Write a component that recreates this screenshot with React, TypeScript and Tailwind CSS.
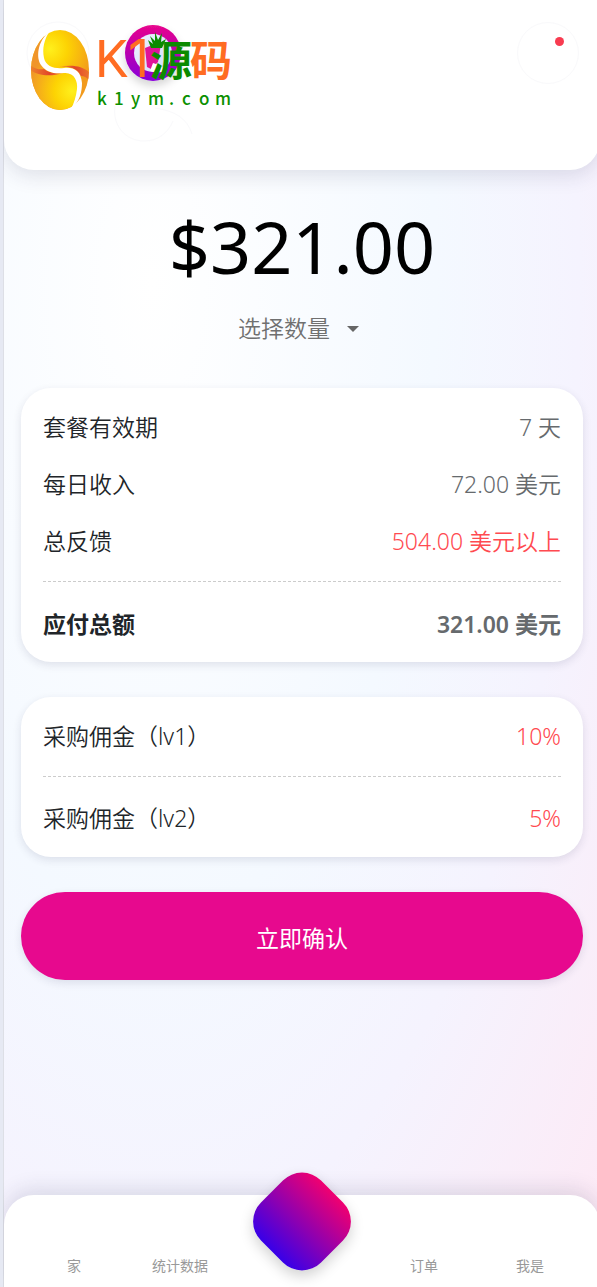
import { useState } from "react"

type Row = {
    label: string
    value: string
    accent?: boolean
}

const planRows: Row[] = [
    { label: "套餐有效期", value: "7 天" },
    { label: "每日收入", value: "72.00 美元" },
    { label: "总反馈", value: "504.00 美元以上", accent: true },
]

const commissionRows: Row[] = [
    { label: "采购佣金（lv1）", value: "10%" },
    { label: "采购佣金（lv2）", value: "5%" },
]

const Logo = () => (
    <svg
        width="240"
        height="135"
        viewBox="0 0 240 135"
        role="img"
        aria-label="K1源码 k1ym.com"
        className="block"
    >
        <defs>
            <radialGradient id="gold" gradientUnits="userSpaceOnUse" cx="29" cy="42" r="44">
                <stop offset="0" stopColor="#fff01c" />
                <stop offset="0.4" stopColor="#fdd303" />
                <stop offset="1" stopColor="#f29a1c" />
            </radialGradient>
            <radialGradient id="goldLow" gradientUnits="userSpaceOnUse" cx="51" cy="84" r="44">
                <stop offset="0" stopColor="#fff01c" />
                <stop offset="0.4" stopColor="#fdd303" />
                <stop offset="1" stopColor="#f0952a" />
            </radialGradient>
            <linearGradient id="flameLeft" x1="0" y1="0" x2="1" y2="0">
                <stop offset="0" stopColor="#ee8a2c" />
                <stop offset="0.6" stopColor="#e2452a" />
                <stop offset="1" stopColor="#f08a22" />
            </linearGradient>
            <linearGradient id="flameRight" x1="0" y1="0" x2="1" y2="0">
                <stop offset="0" stopColor="#f39a21" />
                <stop offset="0.5" stopColor="#e2452a" />
                <stop offset="1" stopColor="#ee7a2c" />
            </linearGradient>
            <linearGradient id="ring" x1="0" y1="0" x2="0" y2="1">
                <stop offset="0" stopColor="#e8078c" />
                <stop offset="0.5" stopColor="#b800b0" />
                <stop offset="1" stopColor="#8800dc" />
            </linearGradient>
            <linearGradient id="core" x1="0" y1="0" x2="1" y2="1">
                <stop offset="0" stopColor="#eef2ff" />
                <stop offset="1" stopColor="#cfdcfa" />
            </linearGradient>
            <clipPath id="coin">
                <ellipse cx="39" cy="63" rx="29" ry="40" />
            </clipPath>
            <filter id="ringShadow" x="-40%" y="-40%" width="180%" height="180%">
                <feDropShadow dx="0" dy="5" stdDeviation="4" floodColor="#000" floodOpacity="0.16" />
            </filter>
        </defs>

        {/* faint outlines behind the mark */}
        <g fill="none" stroke="#f9f9fb">
            <circle cx="37" cy="46" r="31" />
            <path d="M94 99c-3 20 11 35 29 35 14 0 24-8 29-20" />
            <path d="M134 101c20 3 32 10 37 26" />
        </g>

        {/* coin */}
        <g clipPath="url(#coin)">
            <rect x="8" y="20" width="62" height="86" fill="url(#gold)" />
            <path
                d="M0 15H34L28 25C16 36 18 53 22 57 28 65 35 64 43 63 54 62 58 72 58 80 58 90 53 97 51 100L44 108H0z"
                fill="url(#goldLow)"
            />
            <path d="M8 57C13 62 19 63 23 62 28 66 34 67 42 66 30 70 13 69 8 61z" fill="url(#flameLeft)" />
            <path d="M38 60C51 57 63 59 70 67V76C68 72 64 69 60 69 56 61 48 59 38 60z" fill="url(#flameRight)" />
        </g>
        <path
            d="M29 24C16 34 15 51 20 58 26 66 34 67 43 66 53 65 57 74 56 82 55 90 53 96 50 102 59 95 61 84 61 76 60 64 53 60 43 61 34 62 25 60 23 51 21 42 23 32 29 24z"
            fill="#fff"
        />

        {/* ring badge */}
        <circle cx="132" cy="46" r="28" fill="url(#ring)" filter="url(#ringShadow)" />
        <circle cx="132" cy="46" r="19" fill="url(#core)" />
        <path d="M124 41l10-4h6l-3 18-7 7-4-2z" fill="#e0149a" />
        <path d="M132 56l6 2 8 5c-5 3-12 3-17 1z" fill="#fff" />

        <text x="74" y="70" fill="#ff6c22" fontFamily="Roboto, sans-serif" fontSize="52">
            K
        </text>
        <text x="107" y="70" fill="#ff6c22" fontFamily="Inter, sans-serif" fontSize="52">
            1
        </text>
        <g fontFamily="'Noto Sans CJK SC', sans-serif" fontSize="42" fontWeight="700">
            <text x="129" y="69" fill="#0b8a00">源</text>
            <text x="169" y="69" fill="#ff6c22">码</text>
        </g>
        <path
            d="M130 41l-3-8 5 4-3-8 5 5v-9l3 8 4-7-1 9 5-3-4 9z"
            fill="#0b8a00"
        />
        <text
            x="76 93 110 127 148 161 178 194"
            y="98"
            fill="#0b9000"
            fontFamily="'Noto Sans CJK SC', sans-serif"
            fontSize="17"
            fontWeight="500"
        >
            k1ym.com
        </text>
    </svg>
)

const InfoRow = ({ label, value, accent }: Row) => (
    <div className="flex items-center justify-between">
        <dt className="text-[#212529]">{label}</dt>
        <dd className={accent ? "text-[#ff4a50]" : "text-[#666a6d]"}>{value}</dd>
    </div>
)

const NavLink = ({ label }: { label: string }) => (
    <a href="#" className="flex-1 text-center text-[14px] leading-5 text-[#999999]">
        {label}
    </a>
)

export default function App() {
    const [amount, setAmount] = useState("")

    return (
        <div className="flex min-h-screen overflow-hidden border-l-[3px] border-[#e6e9f3] font-['Noto_Sans','Noto_Sans_CJK_SC',sans-serif]">
            <div className="flex min-w-0 flex-1 flex-col border-l border-[#dddfe6] bg-[radial-gradient(ellipse_at_25%_22%,#ffffff_0%,#f4f9ff_45%,#f5f3fe_68%,#fde9f5_100%)]">
                <header className="-mr-[3px] flex h-[170px] items-start justify-between rounded-b-[30px] bg-white pt-[7px] pr-[21px] pl-[17px] shadow-[0_6px_20px_rgba(40,40,80,0.13)]">
                    <Logo />
                    <button
                        type="button"
                        aria-label="通知"
                        className="relative mt-[15px] size-[62px] rounded-full border border-[#f9f9fb]"
                    >
                        <span className="absolute top-[14px] right-[14px] size-[9px] rounded-full bg-[#f83b50]" />
                    </button>
                </header>

                <main className="flex flex-1 flex-col pr-[14px] pl-[17px]">
                    <h1 className="mt-[26px] text-center text-[72px] leading-[100px] text-black">$321.00</h1>

                    <div className="relative mt-3 self-center">
                        <select
                            aria-label="选择数量"
                            value={amount}
                            onChange={(e) => setAmount(e.target.value)}
                            className="h-10 appearance-none bg-transparent pr-9 text-[23px] font-[350] text-[#707070] outline-none"
                        >
                            <option value="">选择数量</option>
                        </select>
                        <svg
                            width="12"
                            height="6"
                            viewBox="0 0 12 6"
                            className="pointer-events-none absolute top-[18px] right-[7px]"
                        >
                            <path d="M0 0h12L6 6z" fill="#666666" />
                        </svg>
                    </div>

                    <dl className="mt-10 rounded-[30px] bg-white px-[22px] pt-[22px] pb-5 text-[23px] leading-[35px] font-[350] shadow-[0_3px_8px_rgba(40,40,80,0.12)]">
                        <div className="flex flex-col gap-[22px]">
                            {planRows.map((row) => (
                                <InfoRow key={row.label} {...row} />
                            ))}
                        </div>
                        <div className="mt-[22px] border-t border-dashed border-[#cccccc] pt-[25px] font-semibold">
                            <InfoRow label="应付总额" value="321.00 美元" />
                        </div>
                    </dl>

                    <dl className="mt-[35px] rounded-[30px] bg-white px-[22px] pt-[22px] pb-[21px] text-[23px] leading-[35px] font-[350] shadow-[0_3px_8px_rgba(40,40,80,0.12)]">
                        <InfoRow {...commissionRows[0]} accent />
                        <div className="mt-[22px] border-t border-dashed border-[#cccccc] pt-6">
                            <InfoRow {...commissionRows[1]} accent />
                        </div>
                    </dl>

                    <button
                        type="button"
                        className="mt-[35px] h-[88px] rounded-full bg-[#e7098e] pt-1 text-[23px] text-white shadow-[0_3px_8px_rgba(40,40,80,0.12)]"
                    >
                        立即确认
                    </button>
                </main>

                <nav className="relative -mr-[3px] flex h-[92px] items-end rounded-t-[30px] bg-white px-[17px] pb-[11px] shadow-[0_-6px_20px_rgba(40,40,80,0.13)]">
                    <NavLink label="家" />
                    <NavLink label="统计数据" />
                    <div className="w-[138px]" />
                    <NavLink label="订单" />
                    <NavLink label="我是" />
                    <button
                        type="button"
                        aria-label="钱包"
                        className="absolute -top-4 left-1/2 size-[85px] -translate-x-1/2 rotate-45 rounded-[27px] bg-[linear-gradient(to_top,#3800e8,#f00070)] shadow-[4px_4px_14px_rgba(0,0,0,0.18)]"
                    />
                </nav>
            </div>
        </div>
    )
}
